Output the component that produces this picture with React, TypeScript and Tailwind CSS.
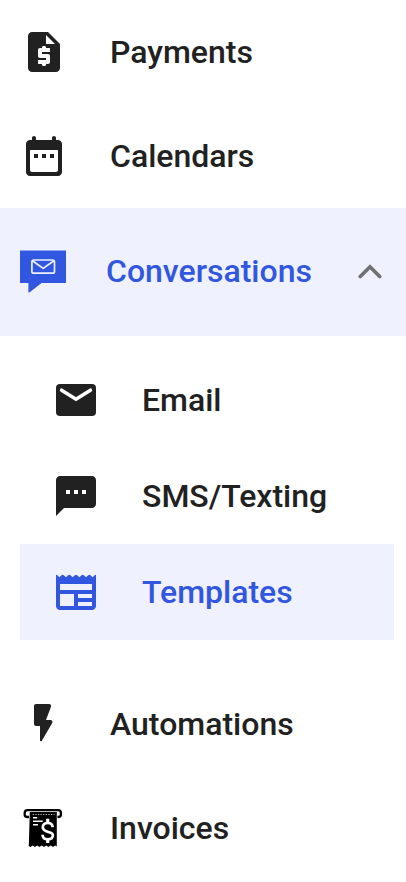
import type { ReactNode } from "react";
import { clsx } from "clsx";

function Icon({ children }: { children: ReactNode }) {
  return (
    <svg viewBox="0 0 24 24" className="h-12 w-12 shrink-0" fill="currentColor" aria-hidden>
      {children}
    </svg>
  );
}

function PaymentsIcon() {
  return (
    <Icon>
      <path d="M14 2H6c-1.1 0-2 .9-2 2v16c0 1.1.9 2 2 2h12c1.1 0 2-.9 2-2V8l-6-6z" />
      <path
        fill="#fff"
        d="M13 8V3.5L17.5 8H13zM15 12h-4v1h3c.55 0 1 .45 1 1v3c0 .55-.45 1-1 1h-1v.6l-.5.4h-1l-.5-.4V18H9v-2h4v-1h-3c-.55 0-1-.45-1-1v-3c0-.55.45-1 1-1h1v-.6l.5-.4h1l.5.4v.6h2v2z"
      />
    </Icon>
  );
}

function CalendarIcon() {
  return (
    <Icon>
      <path d="M9 11H7v2h2v-2zm4 0h-2v2h2v-2zm4 0h-2v2h2v-2zm2-7h-1V3c0-.55-.45-1-1-1s-1 .45-1 1v1H8V3c0-.55-.45-1-1-1s-1 .45-1 1v1H5c-1.11 0-2 .9-2 2v14c0 1.1.89 2 2 2h14c1.1 0 2-.9 2-2V6c0-1.1-.9-2-2-2zm-1 16H6c-.55 0-1-.45-1-1V9h14v10c0 .55-.45 1-1 1z" />
    </Icon>
  );
}

function ConversationsIcon() {
  return (
    <svg viewBox="0 0 46 43" className="h-[43px] w-[46px] shrink-0" aria-hidden>
      <path fill="currentColor" d="M0 .5h46v32.400H21.500L9.400 42.400c-.5.4-1 .1-1-.5v-9H0z" />
      <g fill="none" stroke="#eff1fe" strokeWidth="1.7" strokeLinecap="round" strokeLinejoin="round">
        <rect x="11.9" y="10" width="22.6" height="13.2" rx="1.8" />
        <path d="M12.8 11l10.4 7.4L33.600 11" />
      </g>
    </svg>
  );
}

function EmailIcon() {
  return (
    <Icon>
      <rect x="2" y="4" width="20" height="16" rx="2" />
      <path d="M4.8 7.1L12 11.6l7.2-4.5" fill="none" stroke="#fff" strokeWidth="1.8" strokeLinecap="round" />
    </Icon>
  );
}

function SmsIcon() {
  return (
    <Icon>
      <path d="M20 2H4c-1.1 0-2 .9-2 2v18l4-4h14c1.1 0 2-.9 2-2V4c0-1.1-.9-2-2-2zM9 11H7V9h2v2zm4 0h-2V9h2v2zm4 0h-2V9h2v2z" />
    </Icon>
  );
}

function TemplatesIcon() {
  return (
    <Icon>
      <path d="M22 3.5l-.4-.1-1.27 1.27-1.1-1.1q-.56-.4-1.12 0L17 4.67l-1.1-1.1q-.57-.4-1.13 0l-1.1 1.1-1.1-1.1q-.57-.4-1.13 0l-1.1 1.1-1.11-1.1q-.56-.4-1.12 0L7 4.67l-1.1-1.1q-.57-.4-1.13 0l-1.1 1.1L2.4 3.4l-.4.1V19c0 1.1.9 2 2 2h16c1.1 0 2-.9 2-2V3.5zM11 19H4v-6h7v6zm9 0h-7v-2h7v2zm0-4h-7v-2h7v2zm0-4H4V8h16v3z" />
    </Icon>
  );
}

function AutomationsIcon() {
  return (
    <Icon>
      <path d="M7 3v9c0 .55.45 1 1 1h2v7.15c0 .51.67.69.93.25l5.19-8.9c.39-.67-.09-1.5-.86-1.5H13l2.49-6.65c.25-.65-.23-1.35-.93-1.35H8c-.55 0-1 .45-1 1z" />
    </Icon>
  );
}

function InvoicesIcon() {
  return (
    <svg viewBox="0 0 48 48" className="h-12 w-12 shrink-0" aria-hidden>
      <path
        d="M9 13H7.5C5.8 13 4.7 12 4.7 10.7V9C4.7 7.200 5.800 6.200 7.500 6.200H38C39.800 6.200 40.900 7.200 40.900 9V10.700C40.900 12 39.800 13 38 13H37.500"
        fill="none"
        stroke="#000"
        strokeWidth="2.3"
      />
      <path
        d="M9.800 8h27v34.600l-1.600-1.200-2.200 1.600-2.300-1.600-2.300 1.600-2.200-1.600-2.300 1.600-2.200-1.600-2.300 1.600-2.200-1.600-2.300 1.600-2.200-1.600-2.300 1.600-1.600-1z"
        fill="#000"
      />
      <g fill="none" stroke="#fff">
        <path d="M12.8 10.500h21.500" strokeWidth=".8" strokeDasharray="1.2 1.4" />
        <path d="M13 13.800h4.200M13 17.200h9.700M13 20.800h5" strokeWidth="1.6" />
        <path d="M27.700 14.800v4.500M27.700 34.500v4.500" strokeWidth="3.200" />
        <path
          d="M32.600 23.300c0-2.800-1.800-4.300-4.800-4.300s-5 1.600-5 4.300c0 5.900 10.100 3.500 10.100 7.800 0 2.700-2.200 4.200-5.100 4.200-3.200 0-5.200-1.700-5.200-4.600"
          strokeWidth="2.7"
        />
      </g>
    </svg>
  );
}

type NavItemProps = { icon: ReactNode; label: string; active?: boolean };

function NavItem({ icon, label }: NavItemProps) {
  return (
    <a className="flex h-[104px] items-center gap-[42px] pl-5">
      {icon}
      <span>{label}</span>
    </a>
  );
}

function SubNavItem({ icon, label, active }: NavItemProps) {
  return (
    <a className={clsx("flex h-24 items-center gap-[42px] pl-9", active && "bg-[#eff1fe] text-[#3156e0]")}>
      <span className="-ml-1">{icon}</span>
      <span>{label}</span>
    </a>
  );
}

export default function App() {
  return (
    <nav className="h-[882px] w-[406px] overflow-hidden bg-white font-['Roboto',sans-serif] text-[32px] leading-[38px] font-medium text-[#212121]">
      <NavItem icon={<PaymentsIcon />} label="Payments" />
      <NavItem icon={<CalendarIcon />} label="Calendars" />

      <button
        type="button"
        className="flex h-32 w-full items-center bg-[#eff1fe] pr-6 pl-5 text-left text-[#3156e0]"
      >
        <span className="flex flex-1 items-center gap-10 pb-0.5">
          <ConversationsIcon />
          <span>Conversations</span>
        </span>
        <svg viewBox="0 0 24 16" className="h-4 w-6 shrink-0" fill="none" aria-hidden>
          <path d="M2.3 12.5L12 2.8l9.7 9.7" stroke="#707174" strokeWidth="3.7" strokeLinecap="round" />
        </svg>
      </button>

      <div className="mr-3 ml-5 py-4">
        <SubNavItem icon={<EmailIcon />} label="Email" />
        <SubNavItem icon={<SmsIcon />} label="SMS/Texting" />
        <SubNavItem icon={<TemplatesIcon />} label="Templates" active />
      </div>

      <div className="pt-4">
        <NavItem icon={<AutomationsIcon />} label="Automations" />
        <NavItem icon={<InvoicesIcon />} label="Invoices" />
      </div>
    </nav>
  );
}
